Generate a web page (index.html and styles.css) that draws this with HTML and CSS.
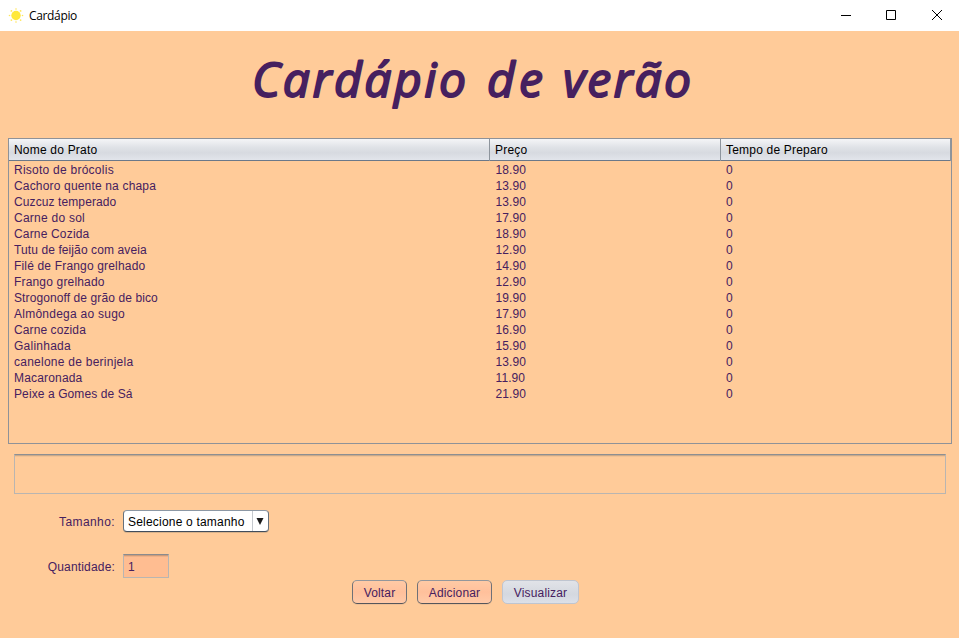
FILE: index.html
```html
<!DOCTYPE html>
<html lang="pt-BR">
<head>
<meta charset="utf-8">
<title>Cardápio</title>
<link rel="stylesheet" href="styles.css">
</head>
<body>
<header class="titlebar">
  <svg class="sun" width="16" height="16" viewBox="0 0 16 16"><circle cx="8" cy="7.500" r="4.700" fill="#ffe83b"/><g fill="#ffe75a"><circle cx="8" cy="1" r=".8"/><circle cx="8" cy="14" r=".8"/><circle cx="1.500" cy="7.500" r=".8"/><circle cx="14.500" cy="7.500" r=".8"/><circle cx="3.400" cy="2.900" r=".9"/><circle cx="12.600" cy="2.900" r=".9"/><circle cx="3.400" cy="12.100" r=".9"/><circle cx="12.600" cy="12.100" r=".9"/></g></svg>
  <span class="caption">Cardápio</span>
  <svg class="controls" width="138" height="31" viewBox="0 0 138 31" fill="none" stroke="#000"><path d="M20 15.5h10M65.500 10.500h9v9h-9zM111 10l10 10M121 10l-10 10"/></svg>
</header>
<main>
  <h1><svg class="title" width="959" height="107"><text x="252" y="66" textLength="214">Cardápio</text><text x="487" y="66" textLength="56">de</text><text x="563" y="66" textLength="128">verão</text></svg></h1>
  <div class="table">
    <div class="row head"><span>Nome do Prato</span><span>Preço</span><span>Tempo de Preparo</span></div>
    <div class="rows">
      <div class="row"><span>Risoto de brócolis</span><span>18.90</span><span>0</span></div>
      <div class="row"><span class="snug">Cachoro quente na chapa</span><span>13.90</span><span>0</span></div>
      <div class="row"><span class="tight">Cuzcuz temperado</span><span>13.90</span><span>0</span></div>
      <div class="row"><span>Carne do sol</span><span>17.90</span><span>0</span></div>
      <div class="row"><span class="snug">Carne Cozida</span><span>18.90</span><span>0</span></div>
      <div class="row"><span class="tight">Tutu de feijão com aveia</span><span>12.90</span><span>0</span></div>
      <div class="row"><span class="snug">Filé de Frango grelhado</span><span>14.90</span><span>0</span></div>
      <div class="row"><span class="snug">Frango grelhado</span><span>12.90</span><span>0</span></div>
      <div class="row"><span class="tight">Strogonoff de grão de bico</span><span>19.90</span><span>0</span></div>
      <div class="row"><span>Almôndega ao sugo</span><span>17.90</span><span>0</span></div>
      <div class="row"><span class="tight">Carne cozida</span><span>16.90</span><span>0</span></div>
      <div class="row"><span>Galinhada</span><span>15.90</span><span>0</span></div>
      <div class="row"><span>canelone de berinjela</span><span>13.90</span><span>0</span></div>
      <div class="row"><span class="snug">Macaronada</span><span>11.90</span><span>0</span></div>
      <div class="row"><span class="tight">Peixe a Gomes de Sá</span><span>21.90</span><span>0</span></div>
    </div>
  </div>
  <div class="notes"></div>
  <div class="field size"><span class="label wide">Tamanho:</span><div class="combo"><span>Selecione o tamanho</span><i><svg width="8" height="7" viewBox="0 0 8 7"><path d="M.5 0h7L4 7z" fill="#1b1b1b"/></svg></i></div></div>
  <div class="field qty"><span class="label snug">Quantidade:</span><div class="input">1</div></div>
  <div class="actions"><button class="back">Voltar</button><button class="add">Adicionar</button><button class="view">Visualizar</button></div>
</main>
</body>
</html>
```

FILE: styles.css
```css
* { box-sizing: border-box; }
body { margin: 0; width: 959px; height: 640px; overflow: hidden; background: #ffcb99; color: #46205f; font: 12px/16px "Liberation Sans", Arial, sans-serif; letter-spacing: .25px; }
.titlebar { height: 31px; background: #fff; display: flex; align-items: center; padding-left: 8px; }
.caption { margin: 1px 0 0 5px; color: #000; font: 12px/16px "Open Sans", sans-serif; letter-spacing: -.35px; }
.controls { margin-left: auto; }
main { height: 609px; border-bottom: 2px solid #fff; }
h1 { margin: 0; height: 107px; }
.title { display: block; fill: #46205f; stroke: #46205f; stroke-width: 1.9px; stroke-linejoin: round; font: italic 400 48px "Open Sans", sans-serif; letter-spacing: 0; }
.table { margin-left: 8px; width: 944px; height: 306px; border: 1px solid #8f9298; }
.row { display: grid; grid-template-columns: 481px 231px 1fr; height: 16px; white-space: nowrap; }
.row span { padding-left: 5px; }
.rows { padding-top: 1px; }
.rows span + span { padding-left: 5.5px; letter-spacing: .1px; }
.rows .row span:last-child { padding-left: 5px; }
.snug { letter-spacing: .17px; }
.tight { letter-spacing: .1px; }
.wide { letter-spacing: .4px; }
.head { height: 22px; line-height: 22px; letter-spacing: .2px; color: #000; border-bottom: 1px solid #6b7889; background: linear-gradient(#f4f5f7, #dfe2e7 40%, #d7dae0 65%, #e2e5eb); }
.head span { border-right: 1px solid #8e959d; }
.notes { margin: 10px 0 0 14px; width: 932px; height: 40px; border: 1px solid #b9b5b1; border-top: 1px solid #8d8f92; box-shadow: inset 0 1px #c9a98a, inset 0 2px #f2c294; }
.field { display: flex; align-items: center; }
.label { width: 115px; text-align: right; margin-right: 8px; padding-top: 1px; }
.size { margin-top: 16px; height: 22px; }
.combo { display: flex; width: 146px; height: 22px; border: 1px solid #66717d; border-top-color: #8c98a5; border-bottom-color: #414d5c; border-radius: 4px; background: #fff; color: #000; line-height: 22px; padding-left: 4px; box-shadow: 0 1px #d8b28b; letter-spacing: .2px; }
.combo span { width: 124px; white-space: nowrap; }
.combo i { width: 16px; height: 20px; border-left: 1px solid #c5c9ce; display: flex; align-items: center; justify-content: center; }
.combo svg { margin-right: 1px; }
.qty { margin-top: 22px; height: 24px; }
.input { width: 46px; height: 24px; padding-left: 4px; line-height: 24px; background: #ffbd91; border: 1px solid #b9b5b1; border-top-color: #8b8b8e; box-shadow: inset 0 1px #c99b7c, inset 0 2px #efb188; }
.actions { display: flex; gap: 10px; margin: 2px 0 0 352px; }
button { height: 24px; padding: 1px 0 0; border: 1px solid #6f7177; border-top-color: #93979c; border-bottom-color: #55565b; border-radius: 5px; background: linear-gradient(#ffcaa5, #ffc09b 50%, #ffcaa8); color: #46205f; font: inherit; letter-spacing: .15px; box-shadow: 0 1px #efc096; }
.back { width: 55px; }
.add { width: 75px; }
.view { width: 77px; border-color: #bfc5d0; background: linear-gradient(#e1e3e8, #d4d8df 60%, #dce0e9); box-shadow: none; }
```
